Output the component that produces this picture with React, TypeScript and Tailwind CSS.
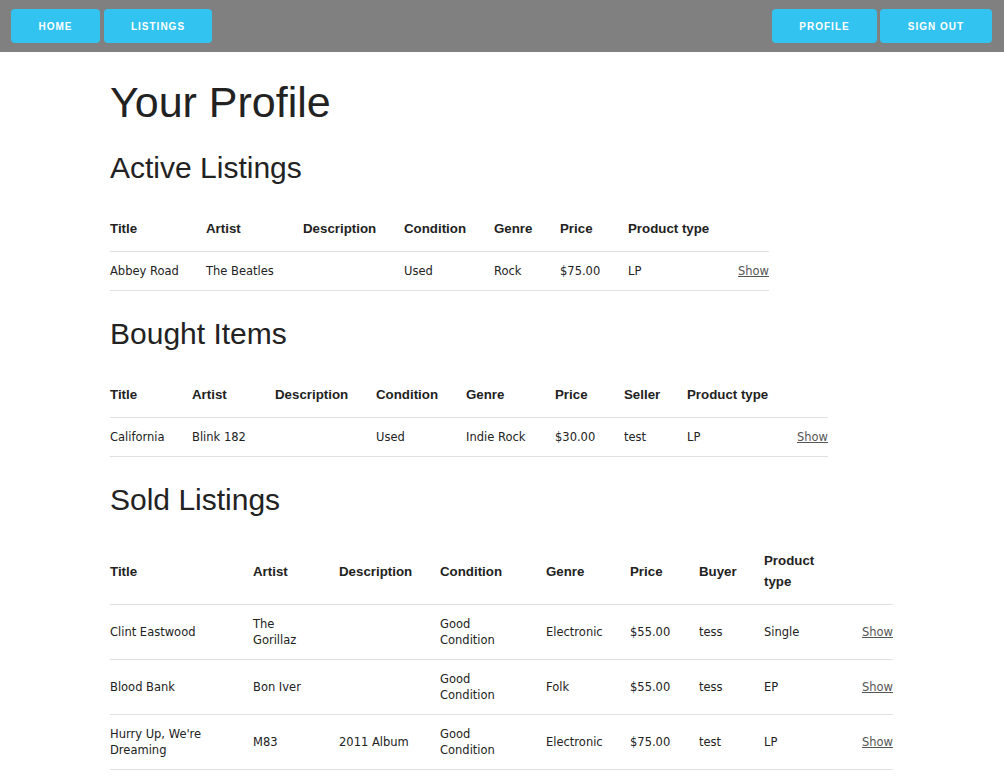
type Row = { cells: string[] };

type TableProps = {
  width: string;
  headers: string[];
  widths: string[];
  rows: Row[];
};

const navBtn =
  "h-[34px] rounded-[4px] bg-[#33c3f0] text-white text-[10px] font-bold uppercase tracking-[1px] flex items-center justify-center";

// cells keep their own line breaks ("\n") so the wrapping matches
function ListingTable({ width, headers, widths, rows }: TableProps) {
  return (
    <table className={`table-fixed border-collapse mb-[25px] ${width}`}>
      <colgroup>
        {widths.map((w, i) => (
          <col key={i} className={w} />
        ))}
      </colgroup>
      <thead>
        <tr>
          {headers.map((h, i) => (
            <th
              key={i}
              className="text-left align-middle whitespace-pre font-bold text-[13.3px] leading-[21px] py-3 pl-[15px] pr-[15px] first:pl-0 last:pr-0 border-b border-[#e1e1e1]"
            >
              {h}
            </th>
          ))}
          <th className="border-b border-[#e1e1e1]"></th>
        </tr>
      </thead>
      <tbody>
        {rows.map((row, r) => (
          <tr key={r}>
            {row.cells.map((c, i) => (
              <td
                key={i}
                className="align-middle whitespace-pre text-[11.5px] leading-[16px] py-[11px] pl-[15px] pr-[15px] first:pl-0 border-b border-[#e1e1e1] font-['DejaVu_Sans',sans-serif]"
              >
                {c}
              </td>
            ))}
            <td className="align-middle text-right whitespace-pre text-[11.5px] leading-[16px] py-[11px] pl-[15px] border-b border-[#e1e1e1] font-['DejaVu_Sans',sans-serif]">
              <a href="#" className="text-[#555] underline">
                Show
              </a>
            </td>
          </tr>
        ))}
      </tbody>
    </table>
  );
}

function App() {
  return (
    <div className="min-h-screen bg-white text-[#222] font-['Liberation_Sans',Arial,sans-serif]">
      <nav className="h-[52px] bg-[#808080] flex items-center justify-between pl-[11px] pr-[12px]">
        <div className="flex gap-[4px]">
          <a href="#" className={`${navBtn} w-[89px]`}>
            Home
          </a>
          <a href="#" className={`${navBtn} w-[108px]`}>
            Listings
          </a>
        </div>
        <div className="flex gap-[3px]">
          <a href="#" className={`${navBtn} w-[105px]`}>
            Profile
          </a>
          <a href="#" className={`${navBtn} w-[112px]`}>
            Sign out
          </a>
        </div>
      </nav>

      <div className="w-[784px] mx-auto pt-[25px]">
        <h1 className="text-[43px] leading-[50px] font-normal mb-[23px]">Your Profile</h1>

        <h2 className="text-[30px] leading-[36px] font-normal mb-[20px]">Active Listings</h2>
        <ListingTable
          width="w-[659px]"
          headers={["Title", "Artist", "Description", "Condition", "Genre", "Price", "Product type"]}
          widths={["w-[81px]", "w-[97px]", "w-[101px]", "w-[90px]", "w-[66px]", "w-[68px]", "w-[109px]", "w-[47px]"]}
          rows={[{ cells: ["Abbey Road", "The Beatles", "", "Used", "Rock", "$75.00", "LP"] }]}
        />

        <h2 className="text-[30px] leading-[36px] font-normal mb-[20px]">Bought Items</h2>
        <ListingTable
          width="w-[718px]"
          headers={["Title", "Artist", "Description", "Condition", "Genre", "Price", "Seller", "Product type"]}
          widths={[
            "w-[67px]",
            "w-[83px]",
            "w-[101px]",
            "w-[90px]",
            "w-[89px]",
            "w-[69px]",
            "w-[63px]",
            "w-[109px]",
            "w-[47px]",
          ]}
          rows={[{ cells: ["California", "Blink 182", "", "Used", "Indie Rock", "$30.00", "test", "LP"] }]}
        />

        <h2 className="text-[30px] leading-[36px] font-normal mb-[20px]">Sold Listings</h2>
        <ListingTable
          width="w-[783px]"
          headers={["Title", "Artist", "Description", "Condition", "Genre", "Price", "Buyer", "Product\ntype"]}
          widths={[
            "w-[128px]",
            "w-[86px]",
            "w-[101px]",
            "w-[106px]",
            "w-[84px]",
            "w-[69px]",
            "w-[65px]",
            "w-[96px]",
            "w-[48px]",
          ]}
          rows={[
            { cells: ["Clint Eastwood", "The\nGorillaz", "", "Good\nCondition", "Electronic", "$55.00", "tess", "Single"] },
            { cells: ["Blood Bank", "Bon Iver", "", "Good\nCondition", "Folk", "$55.00", "tess", "EP"] },
            {
              cells: ["Hurry Up, We're\nDreaming", "M83", "2011 Album", "Good\nCondition", "Electronic", "$75.00", "test", "LP"],
            },
          ]}
        />
      </div>
    </div>
  );
}

export default App;
